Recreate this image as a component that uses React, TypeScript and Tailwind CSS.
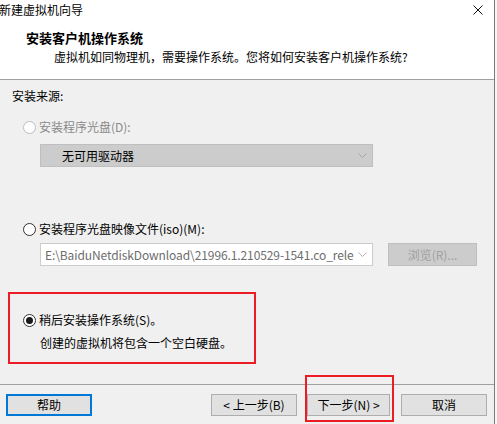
const FONT = "font-['Noto_Sans_CJK_SC',sans-serif]"

function Radio({ checked = false, disabled = false }: { checked?: boolean; disabled?: boolean }) {
    return (
        <span
            className={`w-[13px] h-[13px] rounded-full border flex items-center justify-center shrink-0 bg-white ${disabled ? 'border-[#bcbcbc]' : 'border-[#333333]'}`}
        >
            {checked && <span className="w-[7px] h-[7px] rounded-full bg-[#1a1a1a]" />}
        </span>
    )
}

function Chevron({ color }: { color: string }) {
    return (
        <svg width="9" height="5" viewBox="0 0 9 5" className="shrink-0">
            <path d="M0.5 0.5 L4.5 4.5 L8.5 0.5" fill="none" stroke={color} strokeWidth="1" />
        </svg>
    )
}

function Button({ label, focused = false }: { label: string; focused?: boolean }) {
    return (
        <div
            className={`h-[22px] flex items-center justify-center bg-[#e1e1e1] text-[12px] text-black ${focused ? 'border-2 border-[#0078d7]' : 'border border-[#adadad]'}`}
        >
            {label}
        </div>
    )
}

export default function App() {
    return (
        <div className={`w-[497px] h-[424px] flex overflow-hidden bg-[#f0f0f0] ${FONT}`}>
            <div className="w-[494px] flex flex-col shrink-0">
                {/* Header */}
                <div className="h-[80px] bg-white border-b border-[#a0a0a0] flex flex-col shrink-0">
                    <div className="h-[20px] flex items-center justify-between pr-[11px]">
                        <span className="text-[12px] leading-[20px] text-black -ml-[1px]">新建虚拟机向导</span>
                        <svg width="10" height="10" viewBox="0 0 10 10">
                            <path d="M0.5 0.5 L9.5 9.5 M9.5 0.5 L0.5 9.5" stroke="#111" strokeWidth="1" />
                        </svg>
                    </div>
                    <div className="mt-[10px] pl-[26px] text-[13px] leading-[16px] font-bold text-black">
                        安装客户机操作系统
                    </div>
                    <div className="mt-[3px] pl-[54px] text-[12px] leading-[16px] text-black">
                        虚拟机如同物理机，需要操作系统。您将如何安装客户机操作系统?
                    </div>
                </div>

                {/* Body */}
                <div className="flex-1 flex flex-col relative">
                    <div className="pt-[8px] pl-[12px] text-[12px] leading-[16px] text-black">安装来源:</div>

                    <div className="mt-[15px] pl-[23px] flex items-center gap-[3px] h-[16px]">
                        <Radio disabled />
                        <span className="text-[12px] leading-[16px] text-[#8a8a8a]">安装程序光盘(D):</span>
                    </div>

                    <div className="mt-[9px] ml-[40px] w-[333px] h-[23px] bg-[#cccccc] border border-[#bfbfbf] flex items-center justify-between pl-[21px] pr-[5px]">
                        <span className="text-[12px] text-black">无可用驱动器</span>
                        <Chevron color="#a6a6a6" />
                    </div>

                    <div className="mt-[54px] pl-[23px] flex items-center gap-[3px] h-[16px]">
                        <Radio />
                        <span className="text-[12px] leading-[16px] text-black">安装程序光盘映像文件(iso)(M):</span>
                    </div>

                    <div className="mt-[6px] ml-[40px] flex items-center gap-[15px]">
                        <div className="w-[333px] h-[23px] bg-white border border-[#cccccc] flex items-center pl-[4px] pr-[5px]">
                            <span className="flex-1 whitespace-nowrap text-[12px] tracking-[-0.1px] text-[#6d6d6d]">
                                E:\BaiduNetdiskDownload\21996.1.210529-1541.co_rele
                            </span>
                            <span className="w-[12px] flex justify-end bg-white">
                                <Chevron color="#b5b5b5" />
                            </span>
                        </div>
                        <div className="w-[89px] h-[23px] bg-[#cccccc] border border-[#bfbfbf] flex items-center justify-center text-[12px] text-[#a0a0a0]">
                            浏览(R)...
                        </div>
                    </div>

                    <div className="mt-[26px] ml-[8px] w-[248px] h-[72px] border-2 border-[#ed1c24] flex flex-col pt-[18px]">
                        <div className="pl-[13px] flex items-center gap-[3px] h-[16px]">
                            <Radio checked />
                            <span className="text-[12px] leading-[16px] text-black">稍后安装操作系统(S)。</span>
                        </div>
                        <div className="mt-[7px] pl-[30px] text-[12px] leading-[16px] text-black">
                            创建的虚拟机将包含一个空白硬盘。
                        </div>
                    </div>

                    <div className="mt-[20px] h-px bg-[#a0a0a0]" />

                    <div className="mt-[9px] flex items-center">
                        <div className="ml-[6px] w-[86px]">
                            <Button label="帮助" focused />
                        </div>
                        <div className="ml-[119px] w-[86px]">
                            <Button label="< 上一步(B)" />
                        </div>
                        <div className="ml-[10px] w-[83px]">
                            <Button label="下一步(N) >" />
                        </div>
                        <div className="ml-[11px] w-[86px]">
                            <Button label="取消" />
                        </div>
                    </div>

                    {/* annotation box around next button */}
                    <div className="absolute left-[305px] top-[295px] w-[89px] h-[47px] border-2 border-[#ed1c24]" />
                </div>
            </div>
            <div className="w-px bg-[#7a7a7a] shrink-0" />
            <div className="flex-1 bg-[#f7f7f7]" />
        </div>
    )
}
